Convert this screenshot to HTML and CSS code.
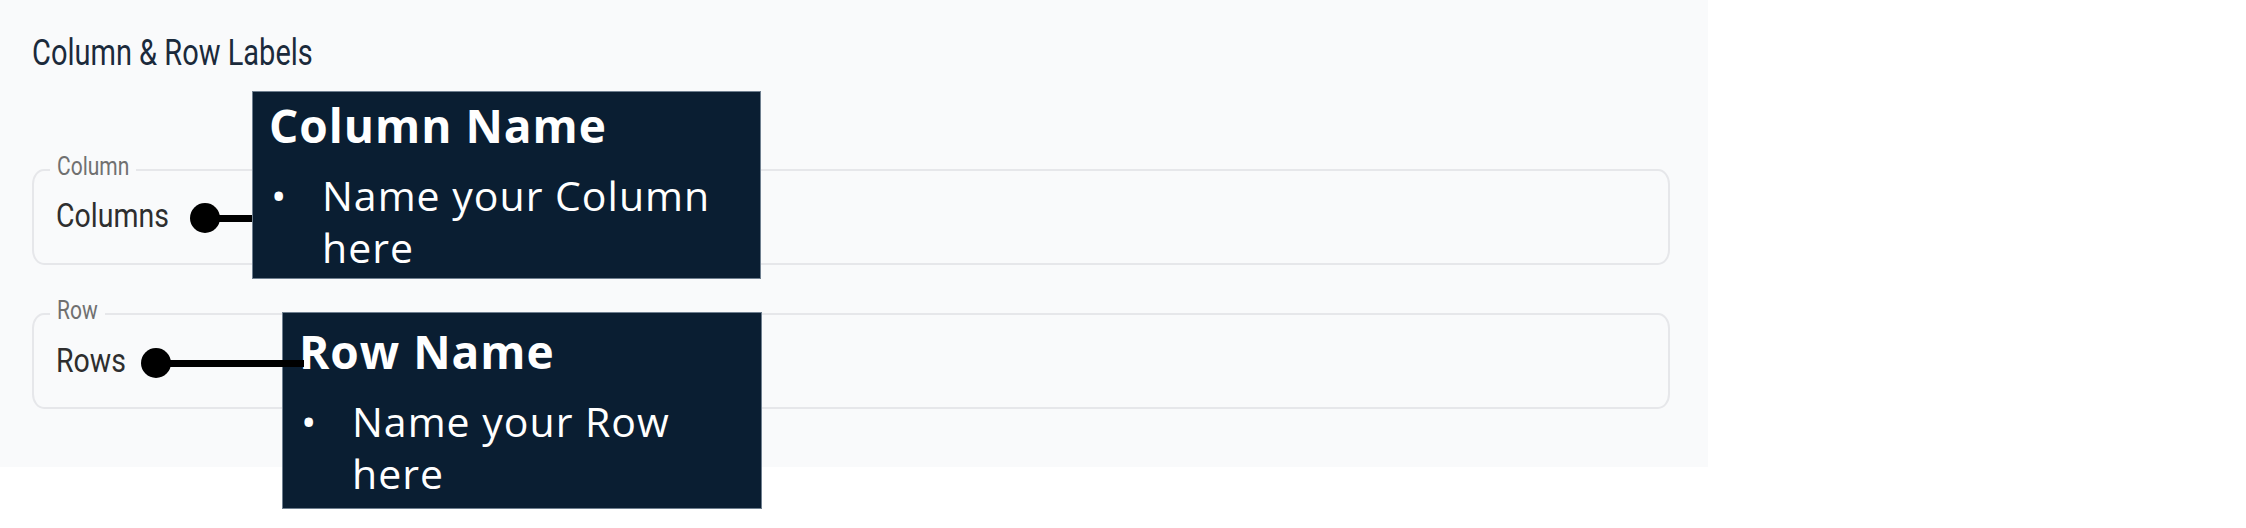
FILE: index.html
```html
<!DOCTYPE html>
<html lang="en">
<head>
<meta charset="utf-8">
<title>Column &amp; Row Labels</title>
<link rel="stylesheet" href="styles.css">
</head>
<body>
<div class="page">
  <section class="panel">
    <h2 class="panel-title"><span class="stretch-title">Column &amp; Row Labels</span></h2>
    <fieldset class="field field-column">
      <legend class="field-legend"><span class="stretch-legend">Column</span></legend>
      <div class="field-value"><span class="stretch-value">Columns</span></div>
    </fieldset>
    <fieldset class="field field-row">
      <legend class="field-legend"><span class="stretch-legend">Row</span></legend>
      <div class="field-value"><span class="stretch-value">Rows</span></div>
    </fieldset>
  </section>

  <span class="pin pin-column"></span>
  <span class="leader leader-column"></span>
  <div class="callout callout-column">
    <h3 class="callout-title">Column Name</h3>
    <ul class="callout-list">
      <li class="callout-item"><span class="callout-bullet">•</span><span class="callout-text">Name your Column here</span></li>
    </ul>
  </div>

  <div class="callout callout-row">
    <h3 class="callout-title">Row Name</h3>
    <ul class="callout-list">
      <li class="callout-item"><span class="callout-bullet">•</span><span class="callout-text">Name your Row here</span></li>
    </ul>
  </div>
  <span class="leader leader-row"></span>
  <span class="pin pin-row"></span>
</div>
</body>
</html>
```

FILE: styles.css
```css
html, body {
  margin: 0;
  padding: 0;
  background: #ffffff;
}

.page {
  position: relative;
  width: 2246px;
  height: 528px;
}

.panel {
  box-sizing: border-box;
  width: 1708px;
  height: 467px;
  background: #f9fafb;
  padding: 35px 38px 0 32px;
  font-family: Roboto, "Liberation Sans", sans-serif;
}

.panel-title {
  margin: 0;
  font-size: 29px;
  line-height: 34px;
  font-weight: 400;
  color: #1b2a3b;
}

.stretch-title {
  display: inline-block;
  transform: scaleY(1.3);
}

.field {
  margin: 85px 0 0 0;
  padding: 0 16px 30px 16px;
  border: 2px solid #e6e7ea;
  border-radius: 12px / 15px;
  min-width: 0;
}

.field-row {
  margin-top: 33px;
}

.field-legend {
  padding: 0 7px 8px 7px;
  font-size: 21px;
  line-height: 24px;
  color: #707070;
}

.stretch-legend {
  display: inline-block;
  transform: scaleY(1.24);
}

.field-value {
  margin-left: 6px;
  padding-top: 13px;
  font-size: 28.5px;
  line-height: 34px;
  color: #2e2e2e;
}

.field-row .field-value {
  padding-top: 14px;
}

.field-row {
  padding-bottom: 29px;
}

.stretch-value {
  display: inline-block;
  transform: scaleY(1.18);
}

/* annotation overlays */
.pin {
  position: absolute;
  width: 30px;
  height: 30px;
  border-radius: 50%;
  background: #000000;
}

.pin-column { left: 190px; top: 203px; }
.pin-row { left: 141px; top: 348px; }

.leader {
  position: absolute;
  height: 7px;
  background: #000000;
}

.leader-column { left: 205px; top: 215px; width: 48px; }
.leader-row { left: 156px; top: 360px; width: 148px; }

.callout {
  position: absolute;
  box-sizing: border-box;
  background: #0a1e32;
  border: 1px solid #6f7f8f;
  color: #ffffff;
  font-family: "Open Sans", "Noto Sans", sans-serif;
  padding: 5px 16px 0 16px;
}

.callout-column { left: 252px; top: 91px; width: 509px; height: 188px; }
.callout-row { left: 282px; top: 312px; width: 480px; height: 197px; padding-top: 10px; }

.callout-title {
  margin: 0;
  font-size: 46px;
  line-height: 56px;
  font-weight: 700;
  letter-spacing: 1px;
}

.callout-list {
  list-style: none;
  margin: 16px 0 0 0;
  padding: 0;
}

.callout-item {
  display: flex;
  font-size: 41px;
  line-height: 52px;
  font-weight: 400;
  letter-spacing: 1px;
}

.callout-bullet {
  flex: 0 0 53px;
  padding-left: 2px;
  box-sizing: border-box;
}

.callout-text {
  flex: 1 1 auto;
}
```
